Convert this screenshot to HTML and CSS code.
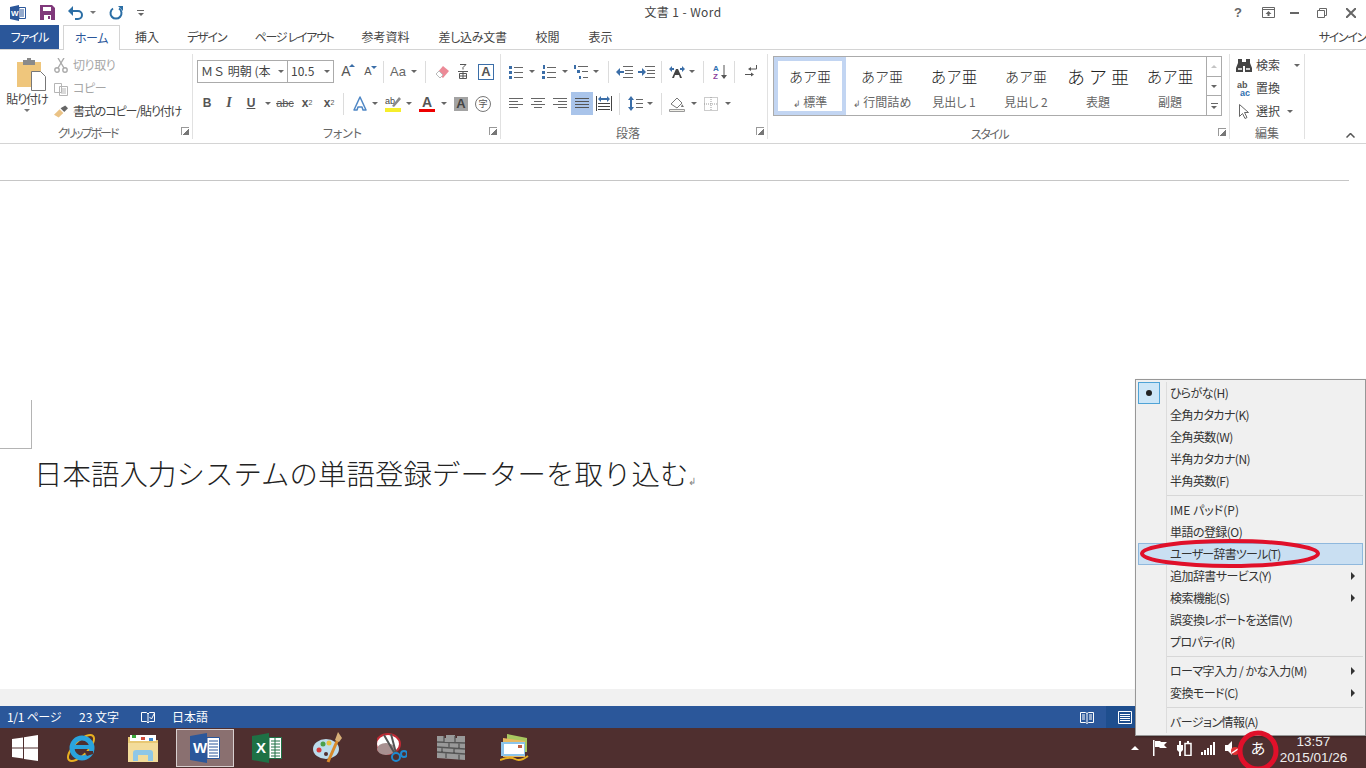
FILE: index.html
```html
<!DOCTYPE html>
<html lang="ja">
<head>
<meta charset="utf-8">
<title>文書 1 - Word</title>
<link rel="stylesheet" href="styles.css">
</head>
<body>
<div class="app">
  <header class="titlebar">
    <div class="qat">
      <svg class="m10" width="16" height="16" viewBox="0 0 16 16"><path fill="#2b579a" d="M0 2l9-2v16l-9-2z"/><path fill="#fff" stroke="#2b579a" d="M9 2.500h6.500v11H9z"/><path stroke="#2b579a" d="M10 5h4M10 7h4M10 9h4M10 11h4"/><text x="1" y="11" class="svg-w">W</text></svg>
      <svg class="m14" width="15" height="15" viewBox="0 0 15 15"><path fill="#80397b" d="M0 0h12l3 3v12H0z"/><path fill="#fff" d="M3 2h8v4H3zM4 10h7v5H4z"/><path fill="#80397b" d="M8 11h2v3H8z"/></svg>
      <svg class="m13" width="16" height="14" viewBox="0 0 16 14"><path fill="none" stroke="#2b6ea5" stroke-width="2" d="M2 5h8a4 4 0 0 1 0 8H7"/><path fill="#2b6ea5" d="M5 0v10L0 5z"/></svg>
      <i class="arr m6 gr"></i>
      <svg class="m13" width="14" height="14" viewBox="0 0 14 14"><path fill="none" stroke="#2b6ea5" stroke-width="2" d="M4 2.500a5.500 5.500 0 1 0 6 0"/><path fill="#2b6ea5" d="M9 0h5v5z"/></svg>
      <span class="custom m14"><i class="bar"></i><i class="arr"></i></span>
    </div>
    <div class="doc-title">文書 1 - Word</div>
    <div class="winctl">
      <span class="help">?</span>
      <svg class="m20" width="13" height="11" viewBox="0 0 13 11"><path fill="none" stroke="#666" d="M.5.500h12v10H.500zM.5 2.500h12"/><path fill="#666" d="M6.500 4l3 3h-2v2h-2V7h-2z"/></svg>
      <svg class="m15" width="9" height="2" viewBox="0 0 9 2"><path fill="#666" d="M0 0h9v2H0z"/></svg>
      <svg class="m18" width="10" height="10" viewBox="0 0 10 10"><path fill="none" stroke="#666" d="M2.500 2.500V.5h7v7h-2M.5 2.500h7v7h-7z"/></svg>
      <svg class="m19" width="10" height="10" viewBox="0 0 10 10"><path stroke="#666" stroke-width="2" d="M0 0l10 10M10 0L0 10"/></svg>
    </div>
  </header>

  <nav class="tabs">
    <span class="tab file">ファイル</span>
    <span class="tab home">ホーム</span>
    <span class="tab t-ins">挿入</span>
    <span class="tab t-des">デザイン</span>
    <span class="tab t-pag">ページ レイアウト</span>
    <span class="tab t-ref">参考資料</span>
    <span class="tab t-mai">差し込み文書</span>
    <span class="tab t-rev">校閲</span>
    <span class="tab t-vie">表示</span>
    <span class="signin">サインイン</span>
  </nav>

  <section class="ribbon">
    <div class="group g-clip">
      <div class="group-body clip-body">
        <div class="paste">
          <svg width="30" height="33" viewBox="0 0 30 33"><path fill="#efc67c" d="M0 4h24v25H0z"/><path fill="#8a8a8a" d="M6 2h12v5H6z"/><path fill="#8a8a8a" d="M10 0h4v3h-4z"/><path fill="#fff" stroke="#777" d="M14.500 13.500h9l5 5v14h-14z"/></svg>
          <span class="paste-label">貼り付け</span>
          <i class="arr gr"></i>
        </div>
        <div class="clip-col">
          <div class="clip-row muted"><svg width="14" height="15" viewBox="0 0 14 15"><circle cx="3" cy="12" r="2.200" fill="none" stroke="#aaa" stroke-width="1.400"/><circle cx="11" cy="12" r="2.200" fill="none" stroke="#aaa" stroke-width="1.400"/><path stroke="#aaa" stroke-width="1.400" d="M4 10L10 0M10 10L4 0"/></svg><span>切り取り</span></div>
          <div class="clip-row muted"><svg width="14" height="14" viewBox="0 0 14 14"><path fill="#fff" stroke="#b5b5b5" d="M.5 1.500h7v9h-7zM5.500 4.500h8v9h-8z"/><path stroke="#b5b5b5" d="M7 7h5M7 9h5M7 11h5"/></svg><span>コピー</span></div>
          <div class="clip-row"><svg width="14" height="14" viewBox="0 0 15 14"><path fill="#eac285" d="M0 10l6-6 4 4-5 5z"/><path fill="#666" d="M7 3l5-3 3 3-4 4z"/></svg><span>書式のコピー/貼り付け</span></div>
        </div>
      </div>
      <div class="group-label lb-clip">クリップボード<i class="launch"></i></div>
    </div>

    <div class="group g-font">
      <div class="group-body">
        <div class="row r-font">
          <span class="combo c-name">ＭＳ 明朝 (本<i class="arr"></i></span>
          <span class="combo c-size">10.5<i class="arr"></i></span>
          <span class="tool wide22 m1 big">A<sup class="blue-up"></sup></span>
          <span class="tool wide22 small">A<sup class="blue-dn"></sup></span>
          <i class="sep m4"></i>
          <span class="tool aa m4">Aa</span><i class="arr m3"></i>
          <i class="sep m8"></i>
          <svg class="m9" width="14" height="14" viewBox="0 0 14 14"><path fill="#ec8a97" d="M2 8l6-7 6 5-6 7z"/><path fill="#fff" stroke="#bbb" d="M1 9l3-3 4 4-3 3z"/></svg>
          <svg class="m9" width="10" height="16" viewBox="0 0 10 16"><path fill="none" stroke="#555" d="M2 .5h6L5 3.500M5 3.500v2M0 7.500h10M1.500 9.500h7v5h-7zM1.500 12h7M5 7.500v7.500"/></svg>
          <span class="box-a m10">A</span>
        </div>
        <div class="row r-font2">
          <span class="tool w22 bold">B</span>
          <span class="tool w22 ital">I</span>
          <span class="tool w22 und">U</span><i class="arr m3"></i>
          <span class="tool w22 m3 strike">abc</span>
          <span class="tool w22 bold">x<sub>2</sub></span>
          <span class="tool w22 bold">x<sup>2</sup></span>
          <i class="sep m3"></i>
          <svg class="m9" width="14" height="15" viewBox="0 0 14 15"><path fill="#fff" stroke="#4f87c5" stroke-width="1.500" stroke-linejoin="round" d="M7 1l6 13h-3l-1-3H5l-1 3H1z"/></svg><i class="arr m5"></i>
          <svg class="m7" width="16" height="16" viewBox="0 0 16 16"><path fill="#f6ee2c" d="M0 12h16v4H0z"/><text x="0" y="8" class="svg-ab">ab</text><path fill="#8a8a8a" d="M7 10l7-9 2 2-7 8z"/></svg><i class="arr m5"></i>
          <span class="color-a m7">A</span><i class="arr m6"></i>
          <span class="grey-a m7">A</span>
          <span class="ji m7">字</span>
        </div>
      </div>
      <div class="group-label lb-font">フォント<i class="launch"></i></div>
    </div>

    <div class="group g-para">
      <div class="group-body">
        <div class="row r-para">
          <svg class="m4" width="14" height="14" viewBox="0 0 14 14"><path fill="#3b6ea8" d="M0 1h3v3H0zM0 6h3v3H0zM0 11h3v3H0z"/><path stroke="#666" d="M5 2.500h9M5 7.500h9M5 12.500h9"/></svg><i class="arr m6"></i>
          <svg class="m7" width="14" height="14" viewBox="0 0 14 14"><path fill="#3b6ea8" d="M1 0h2v4H1zM0 6h3v3H0zM0 11h3v3H0z"/><path stroke="#666" d="M5 2.500h9M5 7.500h9M5 12.500h9"/></svg><i class="arr m6"></i>
          <svg class="m6" width="14" height="14" viewBox="0 0 14 14"><path fill="#3b6ea8" d="M0 0h2v4H0zM3 5h3v3H3zM5 11h2v3H5z"/><path stroke="#666" d="M4 1.500h10M8 6.500h6M9 12.500h5"/></svg><i class="arr m5"></i>
          <i class="sep m9"></i>
          <svg class="m7" width="17" height="12" viewBox="0 0 17 12"><path stroke="#666" d="M7 .5h10M9 4.500h8M9 7.500h8M7 11.500h10"/><path fill="#3b6ea8" d="M0 6l4-4v3h4v2H4v3z"/></svg>
          <svg class="m5" width="17" height="12" viewBox="0 0 17 12"><path stroke="#666" d="M7 .5h10M9 4.500h8M9 7.500h8M7 11.500h10"/><path fill="#3b6ea8" d="M8 6L4 2v3H0v2h4v3z"/></svg>
          <i class="sep m6"></i>
          <svg class="m7" width="16" height="12" viewBox="0 0 16 12"><path fill="#3b6ea8" d="M0 3l3-3v2h2v2H3v2zM16 3l-3-3v2h-2v2h2v2z"/><path fill="#444" d="M7 3h2l4 9h-2l-1-3H6l-1 3H3z"/></svg><i class="arr m4"></i>
          <i class="sep m8"></i>
          <svg class="m9" width="15" height="16" viewBox="0 0 15 16"><text x="0" y="7" class="svg-az a">A</text><text x="0" y="15" class="svg-az z">Z</text><path stroke="#555" d="M11 1v13"/><path fill="#555" d="M11 15l-3-4h6z"/></svg>
          <i class="sep m6"></i>
          <svg class="m10" width="12" height="13" viewBox="0 0 12 13"><path fill="none" stroke="#555" d="M11.500 0v4H6"/><path fill="#555" d="M6 2v4L3 4z"/><path stroke="#555" d="M0 9.500h6"/><path fill="#555" d="M6 7.500v4l3-2z"/></svg>
        </div>
        <div class="row r-para2">
          <svg class="m4" width="14" height="11" viewBox="0 0 14 11"><path stroke="#666" d="M0 .5h14M0 3.500h9M0 6.500h14M0 9.500h9"/></svg>
          <svg class="m8" width="14" height="11" viewBox="0 0 14 11"><path stroke="#666" d="M0 .5h14M3 3.500h8M0 6.500h14M3 9.500h8"/></svg>
          <svg class="m8" width="14" height="11" viewBox="0 0 14 11"><path stroke="#666" d="M0 .5h14M5 3.500h9M0 6.500h14M5 9.500h9"/></svg>
          <span class="justify m4"><svg width="14" height="11" viewBox="0 0 14 11"><path stroke="#555" d="M0 .5h14M0 3.500h14M0 6.500h14M0 9.500h14"/></svg></span>
          <svg class="m3" width="16" height="15" viewBox="0 0 16 15"><path stroke="#444" d="M.5 0v15M15.500 0v15M2 7.500h12M2 10.500h12M2 13.500h12"/><path fill="#3b6ea8" d="M2 3l3-3v2h6V0l3 3-3 3V4H5v2z"/></svg>
          <i class="sep m7"></i>
          <svg class="m8" width="15" height="15" viewBox="0 0 15 15"><path fill="#3b6ea8" d="M3 0l3 4H4v7h2l-3 4-3-4h2V4H0z"/><path stroke="#666" d="M8 3.500h7M8 7.500h7M8 11.500h7"/></svg><i class="arr m4"></i>
          <i class="sep m8"></i>
          <svg class="m7" width="16" height="16" viewBox="0 0 16 16"><path fill="#fff" stroke="#777" d="M2 8l6-6 5 5-5 5z"/><path fill="#777" d="M13 8l2 3h-3z"/><path fill="#f0efe8" stroke="#999" d="M.5 13.500h15v2H.5z"/></svg><i class="arr m6"></i>
          <svg class="m7" width="14" height="14" viewBox="0 0 14 14"><path fill="none" stroke="#999" stroke-dasharray="1 1" d="M.5.500h13v13H.5zM7 0v14M0 7h14"/></svg><i class="arr m7"></i>
        </div>
      </div>
      <div class="group-label lb-para">段落<i class="launch"></i></div>
    </div>

    <div class="group g-style">
      <div class="gallery">
        <div class="style sel"><span class="smp">あア亜</span><span class="lbl"><b>↲</b> 標準</span></div>
        <div class="style"><span class="smp">あア亜</span><span class="lbl"><b>↲</b> 行間詰め</span></div>
        <div class="style"><span class="smp s-h1">あア亜</span><span class="lbl">見出し 1</span></div>
        <div class="style"><span class="smp">あア亜</span><span class="lbl">見出し 2</span></div>
        <div class="style"><span class="smp s-t">あ ア 亜</span><span class="lbl">表題</span></div>
        <div class="style"><span class="smp s-h1">あア亜</span><span class="lbl">副題</span></div>
        <div class="scroller">
          <span><i class="arr up pale"></i></span>
          <span><i class="arr"></i></span>
          <span class="more"><i class="bar"></i><i class="arr"></i></span>
        </div>
      </div>
      <div class="group-label lb-style">スタイル<i class="launch"></i></div>
    </div>

    <div class="group g-edit">
      <div class="edit-col">
        <div class="edit-row"><svg width="16" height="13" viewBox="0 0 16 13"><path fill="#444" d="M2 0h4v3h4V0h4v4l2 5v4H9V7H7v6H0V9l2-5z"/><path fill="#cfcfcf" d="M2 9h4v2H2zM10 9h4v2h-4z"/></svg><span>検索</span><i class="arr m10"></i></div>
        <div class="edit-row"><svg width="16" height="17" viewBox="0 0 16 17"><text x="1" y="8" class="svg-ac gray">ab</text><text x="4" y="16" class="svg-ac blue">ac</text></svg><span>置換</span></div>
        <div class="edit-row"><svg width="16" height="16" viewBox="0 0 16 16"><path fill="#fff" stroke="#666" d="M3.500.5v12l3-3 2.500 5 2-1-2.500-5h4z"/></svg><span>選択</span><i class="arr m3"></i></div>
      </div>
      <div class="group-label lb-edit">編集</div>
    </div>
    <svg class="collapse" width="9" height="5" viewBox="0 0 9 5"><path fill="none" stroke="#555" stroke-width="1.500" d="M.5 4.500l4-4 4 4"/></svg>
  </section>

  <main class="doc">
    <div class="ruler-line"></div>
    <div class="crop"></div>
    <p class="doc-text">日本語入力システムの単語登録データーを取り込む<span class="ret">↲</span></p>
  </main>
  <div class="band"></div>

  <footer class="status">
    <span class="st1">1/1 ページ</span>
    <span class="st2">23 文字</span>
    <svg class="st3" width="14" height="13" viewBox="0 0 14 13"><path fill="none" stroke="#fff" d="M.5 1.500h5l1.500 1.500 1.500-1.500h5v9h-5l-1.500 1.500-1.500-1.500h-5zM7 3v8"/><path fill="none" stroke="#fff" d="M8.500 6l2 2 3-6"/></svg>
    <span class="st4">日本語</span>
    <svg class="st5" width="14" height="13" viewBox="0 0 14 13"><path fill="none" stroke="#fff" d="M.5 1.500h5l1.500 1 1.500-1h5v10h-5l-1.500 1-1.500-1h-5zM7 2.500v9M2 4h3M2 6h3M2 8h3M9 4h3M9 6h3M9 8h3"/></svg>
    <span class="st6"><svg width="14" height="13" viewBox="0 0 14 13"><path fill="none" stroke="#fff" d="M.5.500h13v12H.5zM2 3.500h10M2 5.500h10M2 7.500h10M2 9.500h10"/></svg></span>
  </footer>

  <footer class="taskbar">
    <svg class="start" width="26" height="26" viewBox="0 0 26 26"><path fill="#fff" d="M0 4l11-1.600V12.500H0zM12 2.200L26 0v12.500H12zM0 13.500h11v10L0 22zM12 13.500h14V26l-14-2z"/></svg>
    <svg class="tk1" width="30" height="32" viewBox="0 0 30 32"><ellipse cx="15" cy="16" rx="17" ry="7" transform="rotate(-45 15 16)" fill="none" stroke="#e8b021" stroke-width="2"/><circle cx="16" cy="16" r="10" fill="none" stroke="#2aa3dd" stroke-width="5"/><path stroke="#2aa3dd" stroke-width="4" d="M7 15h18"/><path fill="#4f2f2f" d="M18 19l9 0 0 3-6 2z"/></svg>
    <svg class="tk2" width="32" height="30" viewBox="0 0 32 30"><path fill="#e8c874" d="M1 4h13l2 3h15v22H1z"/><path fill="#fff" d="M3 2h26v6H3z"/><path fill="#3ba93b" d="M5 2h4v3H5z"/><path fill="#d04c3c" d="M14 4h4v3h-4z"/><path fill="#3b88d0" d="M22 5h4v3h-4z"/><path fill="#f3dc9a" d="M1 10h30v19H1z"/><path fill="#8fc7e6" d="M6 28V20q0-3 3-3h14q3 0 3 3v8h-5v-6H11v6z"/></svg>
    <span class="tk-word"><svg width="30" height="30" viewBox="0 0 30 30"><path fill="#2b579a" d="M0 3l17-3v30L0 27z"/><path fill="#fff" stroke="#2b579a" d="M17 4.500h12.500v21H17z"/><path stroke="#2b579a" d="M19 8h9M19 11h9M19 14h9M19 17h9M19 20h9M19 23h9"/><text x="3" y="20" class="svg-big">W</text></svg></span>
    <svg class="tk3" width="30" height="30" viewBox="0 0 30 30"><path fill="#1e7145" d="M0 3l17-3v30L0 27z"/><path fill="#fff" stroke="#1e7145" d="M17 4.500h12.500v21H17z"/><path stroke="#1e7145" d="M19 8h9M19 11h9M19 14h9M19 17h9M19 20h9M19 23h9M23 5v20"/><text x="4" y="20" class="svg-big">X</text></svg>
    <svg class="tk4" width="30" height="32" viewBox="0 0 30 32"><ellipse cx="13" cy="17" rx="13" ry="10" fill="#bcdcec"/><circle cx="6" cy="18" r="2.500" fill="#d83a3a"/><circle cx="10" cy="12" r="2.500" fill="#4aa04a"/><circle cx="16" cy="11" r="2.500" fill="#e8c040"/><circle cx="13" cy="22" r="2" fill="#4f2f2f"/><path stroke="#d88a2a" stroke-width="3" d="M15 30l10-23"/><path fill="#d8b078" d="M22 8l3-8 4 6-3 4z"/></svg>
    <svg class="tk5" width="30" height="32" viewBox="0 0 30 32"><ellipse cx="11" cy="12" rx="12" ry="10" fill="#fff" stroke="#c02a35" stroke-width="2"/><ellipse cx="9" cy="17" rx="9" ry="6" fill="#a89090"/><path stroke="#555" stroke-width="2" d="M7 3l11 19M14 2l5 19"/><circle cx="19" cy="25" r="4" fill="none" stroke="#1f8ad0" stroke-width="2"/><circle cx="27" cy="22" r="3" fill="none" stroke="#1f8ad0" stroke-width="2"/></svg>
    <svg class="tk6" width="30" height="28" viewBox="0 0 30 28"><path fill="#999" d="M0 2h7v2h2V1h9v3h2V2h8v24L0 24z"/><path stroke="#555" stroke-width="1.300" d="M0 8l28 1M0 13l28 2M0 18l28 2M7 2v6M18 2v7M12 8v5M22 9v6M5 13v5M17 14v6M9 18v6M22 20v6"/></svg>
    <svg class="tk7" width="30" height="28" viewBox="0 0 30 28"><path fill="#a8c860" d="M7 0l20 4v14H7z"/><path fill="#e8b860" d="M3 4l22 3v16H3z"/><path fill="#8cc4ea" d="M1 8h24v14H1z"/><path fill="#fff" d="M4 10h20v10H4z"/><path fill="#c06040" d="M18 11h4v3h-4z"/><path fill="none" stroke="#e8b021" stroke-width="2" d="M0 26q10-4 15-1t13-3"/></svg>
    <div class="tray">
      <i class="arr up white"></i>
      <svg class="m14" width="14" height="16" viewBox="0 0 14 16"><path fill="#fff" d="M0 0h1.500v16H0zM2 1h5l1 1h6l-3 3 3 3H7L6 7H2z"/></svg>
      <svg class="m10" width="15" height="15" viewBox="0 0 15 15"><path fill="#fff" d="M2 0h2v4h2v5L4 11v4H2v-4L0 9V4h2z"/><path fill="none" stroke="#fff" stroke-width="1.500" d="M8 2.500h6v12H8z"/><path fill="#fff" d="M10 0h2v2h-2z"/></svg>
      <svg class="m9" width="14" height="13" viewBox="0 0 14 13"><path fill="#fff" d="M0 10h2v3H0zM3 8h2v5H3zM6 6h2v7H6zM9 3h2v10H9zM12 0h2v13h-2z"/></svg>
      <svg class="m10" width="14" height="14" viewBox="0 0 14 14"><path fill="#fff" d="M0 4h3l4-4v14l-4-4H0z"/><circle cx="10" cy="10" r="4" fill="#d33"/><path stroke="#fff" stroke-width="1.500" d="M7 12l6-4"/></svg>
      <span class="ime">あ</span>
      <div class="clock"><span>13:57</span><span>2015/01/26</span></div>
    </div>
  </footer>

  <aside class="menu">
    <div class="mi checked"><span class="chk"></span>ひらがな(H)</div>
    <div class="mi">全角カタカナ(K)</div>
    <div class="mi">全角英数(W)</div>
    <div class="mi">半角カタカナ(N)</div>
    <div class="mi">半角英数(F)</div>
    <div class="ms"></div>
    <div class="mi latin">IME パッド(P)</div>
    <div class="mi">単語の登録(O)</div>
    <div class="mi hot">ユーザー辞書ツール(T)</div>
    <div class="mi sub">追加辞書サービス(Y)</div>
    <div class="mi sub">検索機能(S)</div>
    <div class="mi">誤変換レポートを送信(V)</div>
    <div class="mi">プロパティ(R)</div>
    <div class="ms"></div>
    <div class="mi sub">ローマ字入力 / かな入力(M)</div>
    <div class="mi sub">変換モード(C)</div>
    <div class="ms"></div>
    <div class="mi">バージョン情報(A)</div>
  </aside>
  <svg class="mark-menu" width="182" height="31" viewBox="0 0 182 31"><ellipse cx="91" cy="15.500" rx="88" ry="12.500" fill="none" stroke="#e0102a" stroke-width="4"/></svg>
  <svg class="mark-ime" width="42" height="42" viewBox="0 0 42 42"><circle cx="21" cy="21" r="18" fill="none" stroke="#e0102a" stroke-width="5"/></svg>
</div>
</body>
</html>
```
FILE: styles.css
```css
* { box-sizing: border-box; }
html, body { margin: 0; padding: 0; }
body {
  width: 1366px; height: 768px; overflow: hidden; background: #fff;
  font: 12px/1.2 "Noto Sans CJK JP", "Liberation Sans", sans-serif;
  font-feature-settings: "palt"; color: #444;
}
i { display: block; font-style: normal; }
svg { display: block; flex: none; }
.app { position: relative; width: 1366px; height: 768px; display: flex; flex-direction: column; }

.m1 { margin-left: 1px; } .m2 { margin-left: 2px; } .m3 { margin-left: 3px; } .m4 { margin-left: 4px; } .m5 { margin-left: 5px; }
.m6 { margin-left: 6px; } .m7 { margin-left: 7px; } .m8 { margin-left: 8px; } .m9 { margin-left: 9px; }
.m10 { margin-left: 10px; } .m13 { margin-left: 13px; } .m14 { margin-left: 14px; } .m15 { margin-left: 15px; }
.m18 { margin-left: 18px; } .m19 { margin-left: 19px; } .m20 { margin-left: 20px; }

.arr { width: 0; height: 0; border: 3px solid transparent; border-top: 3px solid #666; border-bottom: 0; flex: none; }
.arr.up { border-top: 0; border-bottom: 3px solid #666; }
.arr.pale { border-bottom-color: #c4c4c4; }
.arr.gr { border-top-color: #777; }
.arr.white { border: 4px solid transparent; border-top: 0; border-bottom: 4px solid #fff; }
.bar { width: 7px; height: 1px; background: #666; margin-bottom: 2px; }

.svg-w { font: bold 8px "Liberation Sans", sans-serif; fill: #fff; }
.svg-big { font: bold 15px "Liberation Sans", sans-serif; fill: #fff; }
.svg-ab { font: 9px "Liberation Sans", sans-serif; fill: #444; }
.svg-az { font: bold 8px "Liberation Sans", sans-serif; }
.svg-az.a { fill: #2f6fb0; } .svg-az.z { fill: #8a3f9e; }
.svg-ac { font: bold 9px "Liberation Sans", sans-serif; }
.svg-ac.gray { fill: #555; } .svg-ac.blue { fill: #2f6fb0; }

.titlebar { height: 25px; flex: none; display: grid; grid-template-columns: 1fr auto 1fr; align-items: center; }
.qat, .winctl { display: flex; align-items: center; }
.qat { height: 23px; }
.custom { display: flex; flex-direction: column; align-items: center; }
.doc-title { font-size: 12px; letter-spacing: .4px; color: #444; }
.winctl { justify-content: flex-end; padding-right: 10px; }
.help { font: bold 13px "Liberation Sans", sans-serif; color: #666; }

.tabs { height: 25px; flex: none; display: flex; align-items: stretch; border-bottom: 1px solid #d4d4d4; position: relative; }
.tab { display: flex; align-items: center; justify-content: center; color: #444; }
.tab.file { width: 59px; background: #2b579a; color: #fff; letter-spacing: -1px; }
.tab.home { width: 57px; margin-left: 4px; height: 25px; background: #fff; border: 1px solid #d4d4d4; border-bottom: 0; color: #2b579a; letter-spacing: -.5px; }
.t-ins { margin-left: 15px; }
.t-des { margin-left: 28px; letter-spacing: -1.100px; }
.t-pag { margin-left: 28px; letter-spacing: -1.300px; }
.t-ref { margin-left: 28px; } .t-mai { margin-left: 29px; letter-spacing: -.3px; } .t-rev { margin-left: 29px; } .t-vie { margin-left: 29px; }
.signin { margin-left: auto; align-self: center; white-space: nowrap; letter-spacing: -1.300px; }

.ribbon { height: 94px; flex: none; display: flex; border-bottom: 1px solid #d4d4d4; position: relative; }
.group { margin-top: 4px; height: 85px; border-right: 1px solid #e1e1e1; display: flex; flex-direction: column; flex: none; }
.group-body { height: 72px; padding-top: 6px; }
.group-label { height: 13px; line-height: 13px; text-align: center; position: relative; color: #666; font-size: 12px; margin-top: 2px; }
.launch { position: absolute; right: 3px; top: 1px; width: 8px; height: 8px; border-left: 1px solid #999; border-top: 1px solid #999; background: linear-gradient(135deg, transparent 55%, #777 55%); }
.g-clip { width: 193px; } .g-font { width: 308px; } .g-para { width: 267px; } .g-style { width: 462px; } .g-edit { width: 75px; }

.clip-body { display: flex; padding-top: 0; }
.paste { width: 54px; display: flex; flex-direction: column; align-items: center; padding-top: 4px; }
.paste svg { margin-left: 10px; }
.paste-label { margin-top: 1px; white-space: nowrap; color: #444; letter-spacing: -1px; }
.paste .arr { margin-top: 3px; }
.clip-col { display: flex; flex-direction: column; }
.clip-row { height: 23px; display: flex; align-items: center; gap: 5px; white-space: nowrap; letter-spacing: -1.100px; }
.clip-row.muted { color: #a6a6a6; letter-spacing: -.4px; }

.row { display: flex; align-items: center; height: 23px; padding-left: 4px; }
.r-font2, .r-para2 { margin-top: 9px; padding-left: 3px; }
.r-para { padding-left: 4px; } .r-para2 { padding-left: 4px; }
.sep { width: 1px; height: 22px; background: #dcdcdc; flex: none; }
.combo { height: 23px; border: 1px solid #ababab; display: flex; align-items: center; justify-content: space-between; padding: 0 3px; background: #fff; white-space: nowrap; color: #444; font-size: 12px; }
.c-name { width: 91px; font-feature-settings: normal; }
.c-size { width: 47px; margin-left: -1px; }
.tool { display: flex; align-items: center; justify-content: center; color: #555; font-family: "Liberation Sans", sans-serif; position: relative; flex: none; }
.w22 { width: 22px; } .wide22 { width: 22px; }
.big { font-size: 14px; } .small { font-size: 11px; }
.aa { font-size: 13px; color: #666; width: 20px; }
.blue-up, .blue-dn { position: absolute; right: 2px; top: 1px; width: 0; height: 0; border: 3px solid transparent; }
.blue-up { border-bottom-color: #3b6ea8; border-top: 0; } .blue-dn { border-top-color: #3b6ea8; border-bottom: 0; }
.box-a { width: 16px; height: 16px; border: 1px solid #3b6ea8; font: bold 13px/14px "Liberation Sans", sans-serif; text-align: center; color: #555; flex: none; }
.bold { font-weight: bold; } .ital { font-style: italic; font-family: "Liberation Serif", serif; font-weight: bold; font-size: 14px; }
.und { text-decoration: underline; font-weight: bold; }
.strike { text-decoration: line-through; font-size: 11px; }
.tool sub, .tool sup { font-size: 7px; line-height: 0; font-weight: normal; }
.color-a { width: 16px; height: 17px; border-bottom: 3px solid #e00; font: bold 14px/14px "Liberation Sans", sans-serif; text-align: center; color: #555; flex: none; }
.grey-a { width: 14px; height: 14px; background: #a3a3a3; font: bold 13px/14px "Liberation Sans", sans-serif; text-align: center; color: #444; flex: none; }
.ji { width: 16px; height: 16px; border: 1px solid #777; border-radius: 50%; font-size: 9px; line-height: 14px; text-align: center; color: #555; flex: none; }
.justify { width: 22px; height: 23px; background: #a9c4ea; display: flex; align-items: center; justify-content: center; flex: none; }

.gallery { margin: 2px 0 0 5px; width: 449px; height: 60px; border: 1px solid #ababab; display: flex; position: relative; }
.style { width: 72px; height: 58px; display: flex; flex-direction: column; align-items: center; padding-top: 9px; }
.style.sel { border: 4px solid #c2d5f2; padding-top: 5px; }
.smp { font-size: 14px; line-height: 20px; font-weight: 300; color: #222; font-feature-settings: normal; white-space: nowrap; }
.s-h1 { font-size: 15.500px; } .s-t { font-size: 18px; }
.lbl { margin-top: 9px; color: #666; white-space: nowrap; font-size: 12px; }
.lbl b { font-weight: normal; font-size: 9px; }
.scroller { position: absolute; right: 0; top: 0; bottom: 0; width: 15px; border-left: 1px solid #ababab; display: flex; flex-direction: column; }
.scroller span { flex: 1; display: flex; flex-direction: column; align-items: center; justify-content: center; border-bottom: 1px solid #ababab; }
.scroller span:last-child { border-bottom: 0; }
.lb-style { margin-top: 11px; padding-right: 18px; letter-spacing: -1.500px; }
.lb-clip { padding-right: 17px; letter-spacing: -2px; }
.lb-font { padding-right: 8px; }
.lb-para { padding-right: 12px; }

.edit-col { display: flex; flex-direction: column; padding-left: 6px; height: 72px; }
.edit-row { height: 23px; display: flex; align-items: center; gap: 4px; color: #444; white-space: nowrap; }
.collapse { position: absolute; right: 11px; top: 83px; }

.doc { flex: 1; background: #fff; overflow: hidden; }
.ruler-line { margin-top: 36px; width: 1349px; height: 1px; background: #c6c6c6; }
.crop { margin-top: 219px; width: 32px; height: 49px; border-right: 1px solid #b4b4b4; border-bottom: 1px solid #b4b4b4; }
.doc-text { margin: 4px 0 0 34px; font-size: 28.400px; line-height: 40px; font-weight: 300; letter-spacing: .1px; color: #222; font-feature-settings: normal; white-space: nowrap; }
.ret { font-size: 10px; color: #888; }
.band { height: 17px; flex: none; background: #f1f1f1; }

.status { height: 22px; flex: none; background: #2b579a; color: #fff; display: flex; align-items: center; position: relative; }
.st1 { margin-left: 7px; width: 72px; letter-spacing: -.3px; } .st2 { width: 62px; } .st3 { margin-right: 17px; } .st4 { width: 100px; }
.st5 { margin-left: auto; margin-right: 12px; }
.st6 { width: 38px; height: 22px; background: #1e4e8e; display: flex; align-items: center; justify-content: center; margin-right: 222px; }

.taskbar { height: 40px; flex: none; background: #4f2f2f; display: flex; align-items: center; position: relative; }
.start { margin-left: 12px; }
.tk1 { margin-left: 28px; } .tk2 { margin-left: 31px; } .tk3 { margin-left: 18px; } .tk4 { margin-left: 31px; } .tk5 { margin-left: 34px; } .tk6 { margin-left: 30px; } .tk7 { margin-left: 33px; }
.tk-word { margin-left: 17px; width: 58px; height: 38px; border: 1px solid #d8cfcf; background: #8a7070; display: flex; align-items: center; justify-content: center; }
.tray { margin-left: auto; display: flex; align-items: center; padding-right: 19px; color: #fff; }
.ime { margin-left: 11px; font-size: 15px; width: 16px; text-align: center; }
.clock { margin-left: 14px; padding-top: 3px; width: 67px; display: flex; flex-direction: column; align-items: center; font: 13.500px/16px "Liberation Sans", sans-serif; color: #eee; white-space: nowrap; }

.menu { position: absolute; left: 1135px; top: 379px; width: 231px; height: 357px; background: #f0f0f0; border: 1px solid #979797; padding: 2px; box-shadow: 1px 1px 2px rgba(0,0,0,.3); }
.menu::before { content: ""; position: absolute; left: 30px; top: 2px; bottom: 2px; width: 1px; background: #dcdcdc; }
.mi { height: 22px; line-height: 21px; padding-left: 32px; color: #333; position: relative; white-space: nowrap; letter-spacing: -.55px; }
.mi.latin { letter-spacing: 0; }
.mi.hot { letter-spacing: -.8px; }
.ms { height: 7px; margin-left: 29px; position: relative; }
.ms::after { content: ""; position: absolute; left: 0; right: 0; top: 3px; height: 1px; background: #d7d7d7; }
.chk { position: absolute; left: 0; top: 0; width: 22px; height: 22px; background: #cde6f7; border: 1px solid #4fa3d6; }
.chk::after { content: ""; position: absolute; left: 7px; top: 7px; width: 6px; height: 6px; border-radius: 50%; background: #222; }
.hot { background: #c9dff2; outline: 1px solid #8fb8dd; outline-offset: -1px; }
.sub::after { content: ""; position: absolute; right: 8px; top: 7px; border: 4px solid transparent; border-left: 4px solid #333; border-right: 0; }

.mark-menu { position: absolute; left: 1139px; top: 538px; }
.mark-ime { position: absolute; left: 1237px; top: 730px; }
```
